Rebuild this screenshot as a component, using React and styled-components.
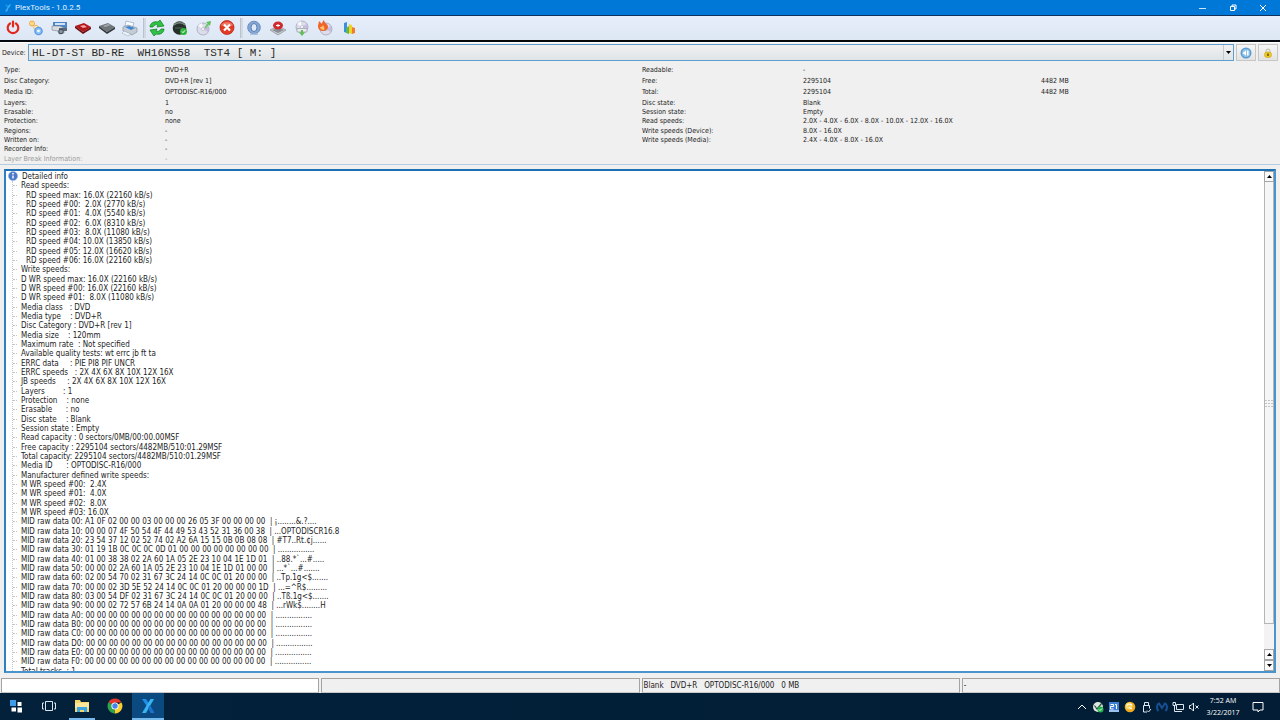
import React from 'react';
import styled, { createGlobalStyle } from 'styled-components';

const GlobalStyle = createGlobalStyle`
    * {
        box-sizing: border-box;
    }
    body {
        margin: 0;
        background-color: #f0f0f0;
        font-family: "DejaVu Sans Condensed", "DejaVu Sans", sans-serif;
        font-size: 8px;
        color: #1c1c1c;
    }
    button {
        margin: 0;
        padding: 0;
        border: 0;
        background: none;
        font: inherit;
        color: inherit;
    }
`;

const Window = styled.div`
    display: flex;
    flex-direction: column;
    height: 100vh;
`;

const TitleBar = styled.header`
    display: flex;
    align-items: center;
    justify-content: space-between;
    height: 15px;
    flex: none;
    padding: 0 2px 0 4px;
    background-color: #0078d7;
    color: #e6f3ff;
`;

const Title = styled.h1`
    display: flex;
    align-items: center;
    gap: 3px;
    margin: 0;
    font: 400 8px/14px "Roboto", "Noto Sans", sans-serif;
`;

const WindowButtons = styled.div`
    display: flex;
`;

const WindowButton = styled.button`
    display: flex;
    align-items: center;
    justify-content: center;
    width: 30px;
    height: 14px;
`;

const Toolbar = styled.div`
    display: flex;
    align-items: center;
    height: 27px;
    flex: none;
    padding: 0 4px;
    border-top: 1px solid #10325c;
    border-bottom: 2px solid #05080c;
    background: linear-gradient(#e6eefa, #dde7f4);
`;

const ToolGroup = styled.div`
    display: flex;
    justify-content: space-between;
    width: ${({ $width }) => $width};
`;

const ToolButton = styled.button`
    display: flex;
    width: 18px;
    height: 18px;
`;

const ToolSeparator = styled.div`
    width: 3px;
    height: 20px;
    margin: 0 2px 0 4px;
    border-left: 1px solid #b9c1cc;
    background-color: #d2d9e3;
`;

const DeviceRow = styled.div`
    display: flex;
    align-items: center;
    height: 20px;
    flex: none;
    padding: 0 2px;
    border-top: 1px solid #fff;
    font-size: 7px;
`;

const DeviceLabel = styled.label`
    width: 26px;
`;

const SelectBox = styled.div`
    display: flex;
    flex: 1;
    height: 17px;
    border: 1px solid #5f9fd0;
    background: linear-gradient(#f1f1f1, #dfe4e8);
    position: relative;
`;

const DeviceSelect = styled.select`
    flex: 1;
    padding: 0 14px 0 3px;
    border: 0;
    appearance: none;
    background: none;
    font: 11px/14px "Liberation Mono", monospace;
    color: #2a2a2a;
`;

const SelectArrow = styled.span`
    position: absolute;
    right: 0;
    top: 0;
    display: flex;
    align-items: center;
    justify-content: center;
    width: 10px;
    height: 100%;
    border-left: 1px solid #c3c9ce;
    pointer-events: none;
`;

const SideButton = styled.button`
    display: flex;
    align-items: center;
    justify-content: center;
    width: 20px;
    height: 17px;
    margin-left: 2px;
    border: 1px solid #c6c6c6;
    background: linear-gradient(#f6f6f6, #e3e3e3);
`;

const InfoArea = styled.section`
    display: flex;
    gap: 4px;
    flex: none;
    padding: 3px 4px 0;
    border-bottom: 1px solid #b4cbe0;
    font-size: 7px;
`;

const InfoColumn = styled.dl`
    display: grid;
    flex: 1;
    grid-template-rows: 11px 11px 11px 10px 9px 9px 10px 9px 9px 10px;
    margin: 0;
`;

const InfoRow = styled.div`
    display: grid;
    grid-template-columns: 161px 238px auto;
    justify-content: start;
    align-items: center;
    color: ${({ $disabled }) => ($disabled ? '#9a9a9a' : 'inherit')};

    dt,
    dd {
        margin: 0;
        line-height: 9px;
        white-space: nowrap;
    }
`;

const Panel = styled.main`
    display: flex;
    flex: 1;
    min-height: 0;
    margin: 4px 4px 0;
    border: 2px solid #4a93cb;
    border-top-color: #1f70b2;
    border-left-color: #2f80c0;
    background-color: #fff;
`;

const Tree = styled.div`
    flex: 1;
    min-width: 0;
    overflow: hidden;
`;

const TreeTitle = styled.div`
    display: flex;
    align-items: center;
    gap: 4px;
    height: 10px;
    padding-left: 2px;
`;

// three rows take 28px
const TreeList = styled.ul`
    display: grid;
    grid-template-rows: repeat(18, 9px 10px 9px);
    margin: 0 0 0 6px;
    padding: 0;
    border-left: 1px dotted #c4c4c4;
    list-style: none;
`;

const TreeRow = styled.li`
    display: flex;
    align-items: center;
    gap: ${({ $indent }) => ($indent ? '9px' : '4px')};
    line-height: 9px;
    white-space: pre;

    &::before {
        content: "";
        width: 4px;
        border-top: 1px dotted #c4c4c4;
    }
`;

const ScrollBar = styled.div`
    display: flex;
    flex-direction: column;
    width: 10px;
    background-color: #f4f2f2;
`;

const ScrollButton = styled.button`
    display: flex;
    align-items: center;
    justify-content: center;
    height: 11px;
    flex: none;
    border: 1px solid #a5a5a5;
    background-color: #fafafa;
`;

const ScrollThumb = styled.div`
    display: flex;
    align-items: center;
    justify-content: center;
    flex: 444;
    border: 1px solid #b5b5b5;
    border-top: 0;
    background-color: #f7f6f6;
`;

const ScrollTrack = styled.div`
    flex: 25;
`;

const StatusBar = styled.footer`
    display: grid;
    grid-template-columns: repeat(4, 1fr);
    gap: 2px;
    height: 20px;
    flex: none;
    padding: 5px 0 1px 1px;
`;

const StatusField = styled.div`
    padding: 0 1px;
    border: 1px solid #a6a3a0;
    border-bottom-color: #c8c8c8;
    background-color: ${({ $filled }) => ($filled ? '#fff' : '#f0f0f0')};
    line-height: 13px;
    white-space: pre;
`;

const TaskBar = styled.nav`
    display: flex;
    justify-content: space-between;
    height: 27px;
    flex: none;
    background: linear-gradient(90deg, #04213b, #021f38 50%, #021d35);
    color: #fff;
`;

const TaskGroup = styled.div`
    display: flex;
    gap: 1px;
`;

const TaskButton = styled.button`
    display: flex;
    flex-direction: column;
    align-items: center;
    justify-content: space-between;
    width: 32px;
    padding-top: 5px;
    background-color: ${({ $active }) => ($active ? '#0b4a80' : 'transparent')};

    &::after {
        content: "";
        width: ${({ $active }) => ($active ? '32px' : '26px')};
        height: 2px;
        background-color: ${({ $running }) => ($running ? '#76b9ed' : 'transparent')};
    }
`;

const Tray = styled.div`
    display: flex;
    align-items: center;
`;

const TrayButton = styled.button`
    display: flex;
    align-items: center;
    justify-content: center;
    width: 16px;
    height: 27px;
`;

const Clock = styled.time`
    width: 42px;
    font: 7px/12px "Open Sans", "Noto Sans", sans-serif;
    text-align: center;
`;

const NoticeButton = styled(TrayButton)`
    width: 28px;
    margin-right: 8px;
`;

const Icon = ({ size = 18, children }) => (
    <svg width={size} height={size} viewBox={`0 0 ${size} ${size}`} fill="none" aria-hidden="true">
        {children}
    </svg>
);

const Disc = ({ cx = 9, cy = 9, r = 6 }) => (
    <g>
        <circle cx={cx} cy={cy} r={r} fill="#dcdcea" stroke="#9b9cb5" strokeWidth=".7" />
        <path d={`M${cx} ${cy}L${cx - r * 0.8} ${cy - r * 0.5}A${r} ${r} 0 0 1 ${cx - r * 0.2} ${cy - r}Z`} fill="#fff" opacity=".8" />
        <path d={`M${cx} ${cy}L${cx + r * 0.8} ${cy + r * 0.5}A${r} ${r} 0 0 0 ${cx + r * 0.8} ${cy - r * 0.5}Z`} fill="#b7a9d8" opacity=".6" />
        <circle cx={cx} cy={cy} r={r * 0.25} fill="#fff" stroke="#9b9cb5" strokeWidth=".5" />
    </g>
);

const PlexLogo = ({ size }) => (
    <svg width={size} height={size} viewBox="0 0 16 16" aria-hidden="true">
        <path d="M2 1h4l3 4.500L7 8.500z" fill="#1f8fe8" />
        <path d="M14 1h-3.500L2 15h4z" fill="#37b4f2" />
        <path d="M8 10l2-3 4.500 8h-4z" fill="#1a72d0" />
    </svg>
);

const toolGroups = [
    {
        width: '135px',
        tools: [
            ['Exit', (
                <>
                    <path d="M6 4.500A5.300 5.300 0 1 0 12 4.500" stroke="#e2261c" strokeWidth="2.200" strokeLinecap="round" />
                    <path d="M9 2.500v5" stroke="#e2261c" strokeWidth="2.200" strokeLinecap="round" />
                </>
            )],
            ['Preferences', (
                <>
                    <circle cx="5" cy="4.500" r="2.500" fill="#ffd98a" stroke="#f0a93c" />
                    <circle cx="9" cy="8.500" r="2.200" fill="#ffedc4" stroke="#e9b565" />
                    <circle cx="11.500" cy="12" r="3.600" fill="#8fc1f5" stroke="#5a9be6" strokeWidth="1.400" />
                    <circle cx="11.500" cy="12" r="1.300" fill="#fff" />
                </>
            )],
            ['Screenshot', (
                <>
                    <path d="M2 3h14v6H2z" fill="#4c86c6" />
                    <path d="M4 4h10v2H4z" fill="#cfe4fa" />
                    <path d="M1 7h8l4 2v5l-5 1-1-3-6-1z" fill="#d9dde2" stroke="#77808c" strokeWidth=".6" />
                    <path d="M8 9h8v3H8z" fill="#5c6775" />
                    <circle cx="10" cy="12.500" r="2.300" fill="#8893a0" stroke="#3e4854" />
                </>
            )],
            ['Open book', (
                <>
                    <path d="M1 7l9-3 7 4-8 5z" fill="#b3161b" />
                    <path d="M1 7v2l8 6v-2zM17 8v2l-8 5v-2z" fill="#6d0d10" />
                    <path d="M6 7l4-1 3 2-4 1z" fill="#f0a7a5" />
                </>
            )],
            ['Close book', (
                <>
                    <path d="M1 7l9-3 7 4-8 5z" fill="#70757a" />
                    <path d="M1 7v2l8 6v-2zM17 8v2l-8 5v-2z" fill="#34383c" />
                    <path d="M5 7l5-2 3 1-6 2z" fill="#a6abb0" />
                </>
            )],
            ['Print', (
                <>
                    <path d="M5 2l8 2-2 5-7-2z" fill="#fff" stroke="#87a6cc" strokeWidth=".7" />
                    <path d="M2 8l5-2 9 3v4l-5 3-9-4z" fill="#c6ccd4" stroke="#8a93a0" strokeWidth=".7" />
                    <path d="M4 8l4-1 6 2-4 2z" fill="#3d86d6" />
                    <path d="M3 12l7 3-3 2-6-3z" fill="#eef3f9" stroke="#8fa0b5" strokeWidth=".5" />
                </>
            )],
        ],
    },
    {
        width: '88px',
        tools: [
            ['Refresh', (
                <>
                    <path d="M2 8c0-4 4-6 8-5l2-2 4 6-7 1 1-2c-2-1-4 0-5 2z" fill="#2fc244" stroke="#0b7a1d" strokeWidth=".7" />
                    <path d="M16 10c0 4-4 6-8 5l-2 2-4-6 7-1-1 2c2 1 4 0 5-2z" fill="#2fc244" stroke="#0b7a1d" strokeWidth=".7" />
                </>
            )],
            ['Start read', (
                <>
                    <circle cx="8.500" cy="9" r="6.800" fill="#26302b" />
                    <path d="M3 6c3-3 8-3 11 0" stroke="#74837a" strokeWidth="1.500" />
                    <path d="M4 9h8" stroke="#55645b" />
                    <circle cx="12.500" cy="12.500" r="3.500" fill="#2fb53c" />
                    <path d="M11 12.500l1 1.200 2-2.400" stroke="#fff" />
                </>
            )],
            ['Eject disc', (
                <>
                    <Disc cx={8} cy={10} r={6} />
                    <path d="M10 9l4-5" stroke="#6cc868" strokeWidth="1.600" />
                    <path d="M11 3l5-1-1 5z" fill="#5bc257" />
                </>
            )],
            ['Stop', (
                <>
                    <circle cx="9" cy="8.500" r="7" fill="#e43a24" stroke="#b0200f" strokeWidth=".7" />
                    <path d="M3 6a7 6 0 0 1 12 0c-3 2-9 2-12 0z" fill="#f3907f" opacity=".7" />
                    <path d="M6 5.500l6 6M12 5.500l-6 6" stroke="#fff" strokeWidth="2.200" />
                </>
            )],
        ],
    },
    {
        width: '113px',
        tools: [
            ['Drive info', (
                <>
                    <circle cx="9" cy="8.500" r="6.300" fill="#86a7d3" stroke="#6b8dbf" />
                    <ellipse cx="9" cy="8.500" rx="3" ry="4" fill="#dce8f6" stroke="#587cb2" />
                    <path d="M5 14.500h8v1.500H5z" fill="#a9c0df" />
                </>
            )],
            ['Disc quality', (
                <>
                    <path d="M1 11l8-4 8 4-8 5z" fill="#c9ccd1" stroke="#8a8f96" strokeWidth=".7" />
                    <path d="M3 11l6-2 6 2-6 3z" fill="#8a8f97" />
                    <ellipse cx="9" cy="6.500" rx="5" ry="4" fill="#cf2a2e" />
                    <path d="M7 6.500h4M9 5v3" stroke="#fff" />
                </>
            )],
            ['Read disc', (
                <>
                    <Disc cx={9} cy={8} r={6} />
                    <path d="M4 9.500h10v3.500H4z" fill="#e9ebef" stroke="#9a9fa7" strokeWidth=".7" />
                    <path d="M9 17l-3-3.500h2V11h2v2.500h2z" fill="#5fbf55" />
                </>
            )],
            ['Burn disc', (
                <>
                    <Disc cx={10} cy={10} r={6} />
                    <path d="M3 2c1 1 2 2 3 3 0-2 1-3 2-4 0 3 4 4 4 7 0 2-2 4-5 4s-5-2-5-5c0-2 1-3 1-5z" fill="#f0642a" />
                    <path d="M7 6c1 2 2 3 1 5-2 0-4-1-4-3 1 0 2 0 3-2z" fill="#ffc36b" />
                </>
            )],
            ['Charts', (
                <>
                    <path d="M4 4l3-1v11l-3-1z" fill="#3c8fdc" />
                    <path d="M6 9l3-2v8l-3-1z" fill="#5fb84f" />
                    <path d="M9 5l3 1v9l-3-1z" fill="#f0d327" />
                    <path d="M12 8l3 1v5l-3 1z" fill="#ef7d2b" />
                </>
            )],
        ],
    },
];

const leftInfo = [
    ['Type:', 'DVD+R'],
    ['Disc Category:', 'DVD+R [rev 1]'],
    ['Media ID:', 'OPTODISC-R16/000'],
    ['Layers:', '1'],
    ['Erasable:', 'no'],
    ['Protection:', 'none'],
    ['Regions:', '-'],
    ['Written on:', '-'],
    ['Recorder Info:', '-'],
    ['Layer Break Information:', '-'],
];

const rightInfo = [
    ['Readable:', '-'],
    ['Free:', '2295104', '4482 MB'],
    ['Total:', '2295104', '4482 MB'],
    ['Disc state:', 'Blank'],
    ['Session state:', 'Empty'],
    ['Read speeds:', '2.0X - 4.0X - 6.0X - 8.0X - 10.0X - 12.0X - 16.0X'],
    ['Write speeds (Device):', '8.0X - 16.0X'],
    ['Write speeds (Media):', '2.4X - 4.0X - 8.0X - 16.0X'],
];

const details = [
    'Read speeds:',
    'RD speed max: 16.0X (22160 kB/s)',
    'RD speed #00:  2.0X (2770 kB/s)',
    'RD speed #01:  4.0X (5540 kB/s)',
    'RD speed #02:  6.0X (8310 kB/s)',
    'RD speed #03:  8.0X (11080 kB/s)',
    'RD speed #04: 10.0X (13850 kB/s)',
    'RD speed #05: 12.0X (16620 kB/s)',
    'RD speed #06: 16.0X (22160 kB/s)',
    'Write speeds:',
    'D WR speed max: 16.0X (22160 kB/s)',
    'D WR speed #00: 16.0X (22160 kB/s)',
    'D WR speed #01:  8.0X (11080 kB/s)',
    'Media class   : DVD',
    'Media type    : DVD+R',
    'Disc Category : DVD+R [rev 1]',
    'Media size    : 120mm',
    'Maximum rate  : Not specified',
    'Available quality tests: wt errc jb ft ta',
    'ERRC data     : PIE PI8 PIF UNCR',
    'ERRC speeds   : 2X 4X 6X 8X 10X 12X 16X',
    'JB speeds     : 2X 4X 6X 8X 10X 12X 16X',
    'Layers        : 1',
    'Protection    : none',
    'Erasable      : no',
    'Disc state    : Blank',
    'Session state : Empty',
    'Read capacity : 0 sectors/0MB/00:00.00MSF',
    'Free capacity : 2295104 sectors/4482MB/510:01.29MSF',
    'Total capacity: 2295104 sectors/4482MB/510:01.29MSF',
    'Media ID      : OPTODISC-R16/000',
    'Manufacturer defined write speeds:',
    'M WR speed #00:  2.4X',
    'M WR speed #01:  4.0X',
    'M WR speed #02:  8.0X',
    'M WR speed #03: 16.0X',
    'MID raw data 00: A1 0F 02 00 00 03 00 00 00 26 05 3F 00 00 00 00  | ¡........&.?....',
    'MID raw data 10: 00 00 07 4F 50 54 4F 44 49 53 43 52 31 36 00 38  | ...OPTODISCR16.8',
    'MID raw data 20: 23 54 37 12 02 52 74 02 A2 6A 15 15 0B 0B 08 08  | #T7..Rt.¢j......',
    'MID raw data 30: 01 19 1B 0C 0C 0C 0D 01 00 00 00 00 00 00 00 00  | ................',
    'MID raw data 40: 01 00 38 38 02 2A 60 1A 05 2E 23 10 04 1E 1D 01  | ..88.*`...#.....',
    'MID raw data 50: 00 00 02 2A 60 1A 05 2E 23 10 04 1E 1D 01 00 00  | ...*`...#.......',
    'MID raw data 60: 02 00 54 70 02 31 67 3C 24 14 0C 0C 01 20 00 00  | ..Tp.1g<$.......',
    'MID raw data 70: 00 00 02 3D 5E 52 24 14 0C 0C 01 20 00 00 00 1D  | ...=^R$.........',
    'MID raw data 80: 03 00 54 DF 02 31 67 3C 24 14 0C 0C 01 20 00 00  | ..Tß.1g<$.......',
    'MID raw data 90: 00 00 02 72 57 6B 24 14 0A 0A 01 20 00 00 00 48  | ...rWk$........H',
    'MID raw data A0: 00 00 00 00 00 00 00 00 00 00 00 00 00 00 00 00  | ................',
    'MID raw data B0: 00 00 00 00 00 00 00 00 00 00 00 00 00 00 00 00  | ................',
    'MID raw data C0: 00 00 00 00 00 00 00 00 00 00 00 00 00 00 00 00  | ................',
    'MID raw data D0: 00 00 00 00 00 00 00 00 00 00 00 00 00 00 00 00  | ................',
    'MID raw data E0: 00 00 00 00 00 00 00 00 00 00 00 00 00 00 00 00  | ................',
    'MID raw data F0: 00 00 00 00 00 00 00 00 00 00 00 00 00 00 00 00  | ................',
    'Total tracks  : 1',
];

const deviceName = 'HL-DT-ST BD-RE  WH16NS58  TST4 [ M: ]'.replace(/ /g, '\u00a0');

const Arrow = ({ up }) => (
    <svg width="5" height="3" viewBox="0 0 5 3" aria-hidden="true">
        <path d={up ? 'M0 3h5L2.500 0z' : 'M0 0h5L2.500 3z'} fill="#000" />
    </svg>
);

const InfoList = ({ rows }) => (
    <InfoColumn>
        {rows.map(([label, value, size]) => (
            <InfoRow key={label} $disabled={label.startsWith('Layer Break')}>
                <dt>{label}</dt>
                <dd>{value}</dd>
                {size && <dd>{size}</dd>}
            </InfoRow>
        ))}
    </InfoColumn>
);

const TitleRow = () => (
    <TitleBar>
        <Title>
            <PlexLogo size={8} />
            PlexTools - 1.0.2.5
        </Title>
        <WindowButtons>
            <WindowButton aria-label="Minimize">
                <Icon size={8}><path d="M0 4.500h7" stroke="#cfe6fa" /></Icon>
            </WindowButton>
            <WindowButton aria-label="Restore">
                <Icon size={8}><path d="M1.500 2.500h4v4h-4zM3 2.500V1h4v4H5.500" stroke="#fff" /></Icon>
            </WindowButton>
            <WindowButton aria-label="Close">
                <Icon size={8}><path d="M1 1l6 6M7 1L1 7" stroke="#fff" /></Icon>
            </WindowButton>
        </WindowButtons>
    </TitleBar>
);

const Tools = () => (
    <Toolbar>
        {toolGroups.map(({ width, tools }, i) => (
            <React.Fragment key={width}>
                {i > 0 && <ToolSeparator />}
                <ToolGroup $width={width}>
                    {tools.map(([name, drawing]) => (
                        <ToolButton key={name} aria-label={name}>
                            <Icon>{drawing}</Icon>
                        </ToolButton>
                    ))}
                </ToolGroup>
            </React.Fragment>
        ))}
    </Toolbar>
);

const Device = () => (
    <DeviceRow>
        <DeviceLabel htmlFor="device">Device:</DeviceLabel>
        <SelectBox>
            <DeviceSelect id="device">
                <option>{deviceName}</option>
            </DeviceSelect>
            <SelectArrow><Arrow /></SelectArrow>
        </SelectBox>
        <SideButton aria-label="Eject">
            <Icon size={12}>
                <circle cx="6" cy="6" r="5.500" fill="#5a9bd0" />
                <circle cx="6" cy="6" r="4" fill="#8fc3ea" />
                <path d="M2.500 6L6 3.500v5zM7 3.500h1.500v5H7z" fill="#fff" />
            </Icon>
        </SideButton>
        <SideButton aria-label="Lock">
            <Icon size={12}>
                <path d="M4 6V4a2 2 0 0 1 4 0v2" stroke="#b9b9a8" />
                <rect x="2.500" y="5" width="7" height="5.500" rx="2.500" fill="#ecc922" stroke="#c9a31a" strokeWidth=".6" />
                <path d="M6 6.500v2.500" stroke="#3b2f05" strokeWidth="1.200" />
            </Icon>
        </SideButton>
    </DeviceRow>
);

const DetailPanel = () => (
    <Panel>
        <Tree>
            <TreeTitle>
                <Icon size={10}>
                    <circle cx="5" cy="5" r="4.600" fill="#4a78ca" stroke="#9db7e4" strokeWidth=".6" />
                    <path d="M5 4.500v3" stroke="#fff" strokeWidth="1.400" />
                    <circle cx="5" cy="2.700" r=".9" fill="#fff" />
                </Icon>
                Detailed info
            </TreeTitle>
            <TreeList>
                {details.map((line) => (
                    <TreeRow key={line} $indent={line.startsWith('RD')}>{line}</TreeRow>
                ))}
            </TreeList>
        </Tree>
        <ScrollBar>
            <ScrollButton aria-label="Scroll up"><Arrow up /></ScrollButton>
            <ScrollThumb>
                <Icon size={8}>
                    <path d="M0 1.500h8M0 4.500h8M0 7.500h8" stroke="#c4c4c4" strokeDasharray="2 1" />
                </Icon>
            </ScrollThumb>
            <ScrollTrack />
            <ScrollButton aria-label="Page up"><Arrow up /></ScrollButton>
            <ScrollButton aria-label="Scroll down"><Arrow /></ScrollButton>
        </ScrollBar>
    </Panel>
);

const Desktop = () => (
    <TaskBar>
        <TaskGroup>
            <TaskButton aria-label="Start">
                <Icon size={16}>
                    <path d="M2 2h6v6H2z" fill="#3d9be9" />
                    <path d="M9.500 4h4v4h-4zM3.500 9.500H8v4H3.500zM9.500 9.500H14v5H9.500z" fill="#fff" />
                </Icon>
            </TaskButton>
            <TaskButton aria-label="Task view">
                <Icon size={16}>
                    <path d="M4.500 3.500h7v9h-7zM3 5H1.500v6H3M13 5h1.500v6H13" stroke="#dfe7ee" />
                </Icon>
            </TaskButton>
            <TaskButton aria-label="File Explorer" $running>
                <Icon size={16}>
                    <path d="M1 2h5l1 2h8v10H1z" fill="#f6d36b" />
                    <path d="M1 5h14v5H1z" fill="#fbe69b" />
                    <path d="M3 14V9h10v5h-3v-2H6v2z" fill="#3aa5e0" />
                </Icon>
            </TaskButton>
            <TaskButton aria-label="Chrome">
                <Icon size={16}>
                    <path d="M8 8L1.500 4.300A7.400 7.400 0 0 1 14.500 4.500H8z" fill="#e2392c" />
                    <path d="M8 8l6.500-3.500A7.400 7.400 0 0 1 7.500 15.400z" fill="#fbce2f" />
                    <path d="M8 8l-.5 7.400A7.400 7.400 0 0 1 1.500 4.300z" fill="#2fa24c" />
                    <circle cx="8" cy="8" r="3.600" fill="#fff" />
                    <circle cx="8" cy="8" r="2.700" fill="#4384ee" />
                </Icon>
            </TaskButton>
            <TaskButton aria-label="PlexTools" $active $running>
                <PlexLogo size={16} />
            </TaskButton>
        </TaskGroup>
        <Tray>
            <TrayButton aria-label="Show hidden icons">
                <Icon size={10}><path d="M1 7l4-4 4 4" stroke="#fff" /></Icon>
            </TrayButton>
            <TrayButton aria-label="Device protected">
                <Icon size={12}>
                    <circle cx="6" cy="6" r="5" fill="#dfe6e2" />
                    <path d="M2.500 4.500L5 8l5-6" stroke="#24543a" strokeWidth="1.200" />
                    <circle cx="8.500" cy="8.500" r="3" fill="#22b14c" />
                    <path d="M7 8.500l1 1 2-2" stroke="#fff" />
                </Icon>
            </TrayButton>
            <TrayButton aria-label="Calendar">
                <Icon size={12}>
                    <path d="M1 1h10v10H1z" fill="#3c7fd4" />
                    <path d="M1 9h10v2H1z" fill="#9cc1ef" />
                    <path d="M2.500 3.500h3v2h-3v2.500h3M7 3.500h1.500V8" stroke="#fff" />
                </Icon>
            </TrayButton>
            <TrayButton aria-label="Updates">
                <Icon size={12}>
                    <circle cx="6" cy="6" r="5.300" fill="#f0a81e" />
                    <circle cx="5" cy="5" r="3.500" fill="#fbd766" />
                    <path d="M3 4.500c1-2 4-2 5 0M5 6.500l3 1.500" stroke="#fff" strokeWidth="1.200" />
                </Icon>
            </TrayButton>
            <TrayButton aria-label="Safely remove hardware">
                <Icon size={12}>
                    <path d="M4.500 4V1.500h4V4M3.500 4.500h6v3M3.500 4.500v6.500H7M7 9.500l1.500 1.500L11 8" stroke="#dfe7ee" />
                </Icon>
            </TrayButton>
            <TrayButton aria-label="Malwarebytes">
                <Icon size={12}>
                    <path d="M2.500 10C0 7 1 3 3 2.500L6 7l3-4.500c2 .5 3 4.500.5 7.500" stroke="#174f94" strokeWidth="2" />
                </Icon>
            </TrayButton>
            <TrayButton aria-label="Network">
                <Icon size={12}>
                    <path d="M4.500 3.500h7v5h-7zM6 10.500h4M1 1.500h2.500v3H1zM2.500 5v5.500H6" stroke="#dfe7ee" />
                </Icon>
            </TrayButton>
            <TrayButton aria-label="Volume muted">
                <Icon size={12}>
                    <path d="M1.500 4.500h1.500L5.500 2v8L3 7.500H1.500zM7.500 4.500l3 3M10.500 4.500l-3 3" stroke="#fff" strokeWidth=".9" />
                </Icon>
            </TrayButton>
            <Clock>7:52 AM<br />3/22/2017</Clock>
            <NoticeButton aria-label="Action center">
                <Icon size={12}><path d="M1 1.500h10v7.500H8L6 11V9H1z" stroke="#fff" /></Icon>
            </NoticeButton>
        </Tray>
    </TaskBar>
);

const App = () => (
    <>
        <GlobalStyle />
        <Window>
            <TitleRow />
            <Tools />
            <Device />
            <InfoArea>
                <InfoList rows={leftInfo} />
                <InfoList rows={rightInfo} />
            </InfoArea>
            <DetailPanel />
            <StatusBar>
                <StatusField $filled />
                <StatusField />
                <StatusField>{'Blank   DVD+R   OPTODISC-R16/000   0 MB'}</StatusField>
                <StatusField>-</StatusField>
            </StatusBar>
            <Desktop />
        </Window>
    </>
);

export default App;
